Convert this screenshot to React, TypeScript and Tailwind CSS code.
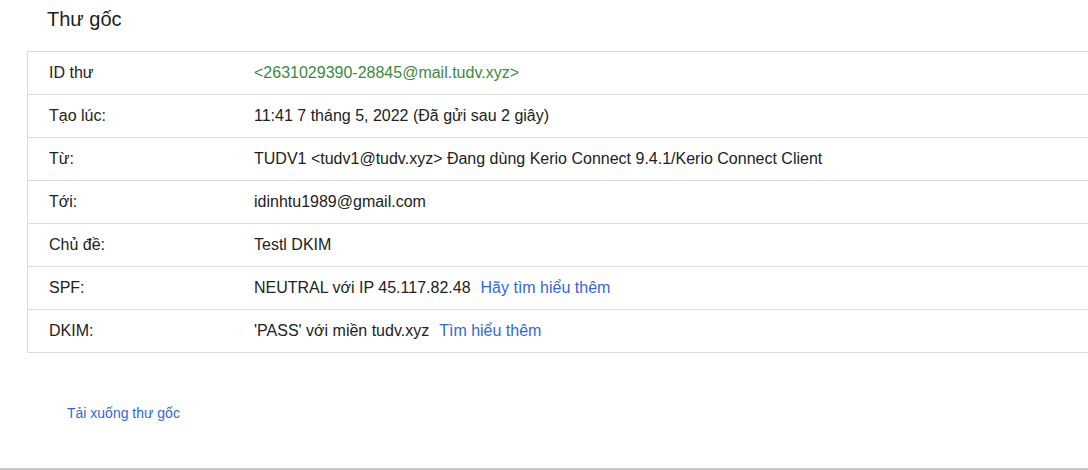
const ROWS: { label: string; value: React.ReactNode }[] = [
  {
    label: 'ID thư',
    value: <span className="text-[#3b8a3e]">&lt;2631029390-28845@mail.tudv.xyz&gt;</span>,
  },
  { label: 'Tạo lúc:', value: '11:41 7 tháng 5, 2022 (Đã gửi sau 2 giây)' },
  {
    label: 'Từ:',
    value: 'TUDV1 <tudv1@tudv.xyz> Đang dùng Kerio Connect 9.4.1/Kerio Connect Client',
  },
  { label: 'Tới:', value: 'idinhtu1989@gmail.com' },
  { label: 'Chủ đề:', value: 'Testl DKIM' },
  {
    label: 'SPF:',
    value: (
      <>
        NEUTRAL với IP 45.117.82.48
        <a className="ml-[10px] text-[#3367d6]">Hãy tìm hiểu thêm</a>
      </>
    ),
  },
  {
    label: 'DKIM:',
    value: (
      <>
        'PASS' với miền tudv.xyz
        <a className="ml-[10px] text-[#3367d6]">Tìm hiểu thêm</a>
      </>
    ),
  },
]

export default function App() {
  return (
    <div className="h-[470px] w-[1088px] overflow-hidden bg-white font-['Liberation_Sans',Arial,sans-serif] text-[#222]">
      <div className="h-[468px]">
        <h1 className="pl-[47px] pt-[7px] text-[20px] leading-[24px] text-[#222]">Thư gốc</h1>

        {/* header table */}
        <div className="ml-[27px] mt-[20px] w-[1100px] border border-[#dcdcdc]">
          {ROWS.map((r, i) => (
            <div
              key={r.label}
              className={`flex items-center text-[16px] ${i > 0 ? 'h-[43px] border-t border-[#dcdcdc]' : 'h-[42px]'}`}
            >
              <div className="w-[226px] shrink-0 pl-[21px]">{r.label}</div>
              <div className="whitespace-nowrap">{r.value}</div>
            </div>
          ))}
        </div>

        <a className="ml-[67px] mt-[50px] block text-[14px] text-[#3367d6]">Tải xuống thư gốc</a>
      </div>
      <div className="h-[2px] bg-[#c8c8c8]" />
    </div>
  )
}
